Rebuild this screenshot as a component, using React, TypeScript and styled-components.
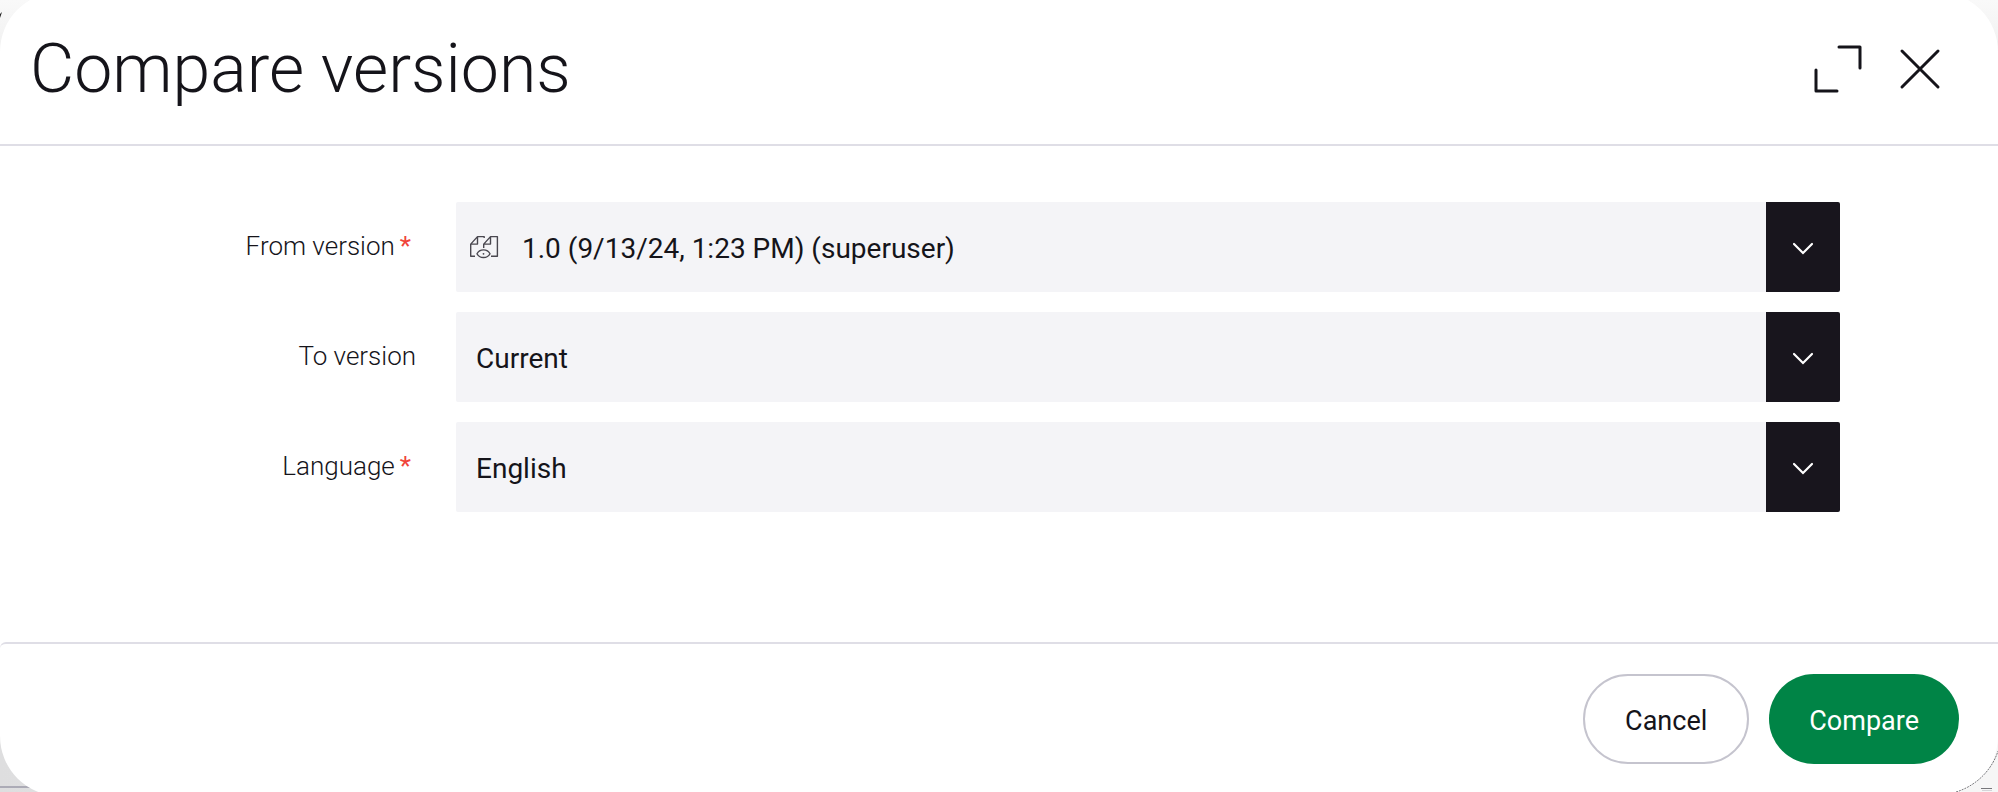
import React, { useId } from "react";
import styled, { createGlobalStyle } from "styled-components";

const GlobalStyle = createGlobalStyle`
  *, *::before, *::after { box-sizing: border-box; }
  body {
    margin: 0;
    color: #15141a;
    background: #f6f6f7;
    font-family: Roboto, "Liberation Sans", sans-serif;
  }
`;

const Backdrop = styled.div`
  position: relative;
  display: flex;
  flex-direction: column;
  min-height: 100vh;
  overflow: hidden;
  background: linear-gradient(to right, #dededf, #f6f6f6 50%) bottom / 100% 50% no-repeat,
    linear-gradient(to bottom, #f9f9f9, #efefef 60px);
`;

const PageRule = styled.div`
  position: absolute;
  left: 0;
  bottom: 4px;
  width: 40px;
  height: 2px;
  background: #acabb6;
`;

const PageCorner = styled.svg`
  position: absolute;
  right: 0;
  bottom: 0;
  width: 44px;
  height: 46px;
`;

const PageMark = styled.svg`
  position: absolute;
  top: 12px;
  left: 0;
  width: 2px;
  height: 6px;
`;

const Dialog = styled.section`
  position: relative;
  flex: 1;
  display: flex;
  flex-direction: column;
  margin: -8px 0 -4px;
  border-radius: 60px;
  background: #fff;
`;

const Header = styled.header`
  display: flex;
  justify-content: space-between;
  align-items: center;
  height: 154px;
  padding: 2px 42px 0 30px;
  border-bottom: 2px solid #dfdee6;
`;

const Title = styled.h1`
  margin: 0;
  font-size: 68px;
  line-height: 80px;
  font-weight: 300;
`;

const HeaderActions = styled.div`
  display: flex;
  gap: 10px;
`;

const IconButton = styled.button`
  display: flex;
  align-items: center;
  justify-content: center;
  width: 72px;
  height: 72px;
  padding: 0;
  border: 0;
  background: none;
  color: inherit;
  cursor: pointer;
`;

const Form = styled.form`
  flex: 1;
  display: flex;
  flex-direction: column;
  gap: 20px;
  padding: 56px 158px 128px 0;
`;

const Row = styled.div`
  display: grid;
  grid-template-columns: 416px 1fr;
  column-gap: 40px;
  align-items: center;
`;

const Label = styled.label`
  padding-bottom: 2px;
  text-align: right;
  font-size: 26px;
  line-height: 32px;
  font-weight: 300;
`;

const Required = styled.span`
  margin: 0 5px;
  color: #f0443a;
  font-weight: 400;
`;

const SelectBox = styled.div`
  display: grid;
  grid-template-columns: 66px 1fr 74px;
  height: 90px;
  border-radius: 2px;
  overflow: hidden;
  background: #f4f4f7;
`;

const Select = styled.select<{ $withIcon: boolean }>`
  grid-area: 1 / 1 / 2 / 4;
  appearance: none;
  width: 100%;
  height: 100%;
  margin: 0;
  padding: 2px 80px 0 ${(p) => (p.$withIcon ? 66 : 20)}px;
  border: 0;
  border-radius: 0;
  background: transparent;
  color: inherit;
  font: 400 28px Roboto, "Liberation Sans", sans-serif;
  cursor: pointer;
`;

const ValueIcon = styled.span`
  grid-area: 1 / 1;
  display: flex;
  align-items: center;
  padding-left: 13px;
  pointer-events: none;
`;

const Arrow = styled.span`
  grid-area: 1 / 3;
  display: flex;
  align-items: center;
  justify-content: center;
  padding-top: 2px;
  background: #18151d;
  color: #fff;
  pointer-events: none;
`;

const Footer = styled.footer`
  display: flex;
  justify-content: flex-end;
  gap: 20px;
  height: 154px;
  padding: 30px 39px 0;
  border-top: 2px solid #dfdee6;
  border-top-left-radius: 6px;
`;

const Button = styled.button<{ $primary?: boolean }>`
  height: 90px;
  padding: 4px 40px 0;
  border: ${(p) => (p.$primary ? "0" : "2px solid #c5c4ce")};
  border-radius: 45px;
  background: ${(p) => (p.$primary ? "#008446" : "#fff")};
  color: ${(p) => (p.$primary ? "#fff" : "inherit")};
  font: 400 27px Roboto, "Liberation Sans", sans-serif;
  cursor: pointer;
`;

const ExpandIcon = () => (
  <svg width="50" height="50" viewBox="0 0 50 50" fill="none" stroke="currentColor" strokeWidth="3" strokeLinecap="round" strokeLinejoin="round" aria-hidden="true">
    <path d="M26 3H47V24M3 26V47H24" />
  </svg>
);

const CloseIcon = () => (
  <svg width="42" height="42" viewBox="0 0 42 42" fill="none" stroke="currentColor" strokeWidth="3" strokeLinecap="round" aria-hidden="true">
    <path d="M3 3 39 39M39 3 3 39" />
  </svg>
);

const ChevronIcon = () => (
  <svg width="22" height="14" viewBox="0 0 22 14" fill="none" stroke="currentColor" strokeWidth="2.2" strokeLinecap="round" aria-hidden="true">
    <path d="M2 3 11 12 20 3" />
  </svg>
);

const VersionsIcon = () => (
  <svg width="30" height="26" viewBox="0 0 30 26" fill="none" stroke="#49474f" strokeWidth="1.4" strokeLinejoin="round" aria-hidden="true">
    <path d="M6 22.3H1.7V10.1L8.5 2.6H15.2V4.1M8.5 2.6V10.1H1.7" />
    <path d="M14.7 14.1V10.1L21.5 2.6H28.4V22.3H22M21.5 2.6V10.1H14.7" />
    <path d="M8 19.8C10.5 14.6 18.5 14.6 21 19.8C18.5 24.8 10.5 24.8 8 19.8Z" />
    <circle cx="14.5" cy="19.8" r="0.9" fill="#49474f" stroke="none" />
  </svg>
);

type FieldProps = {
  label: string;
  options: string[];
  required?: boolean;
  icon?: React.ReactNode;
};

const Field = ({ label, options, required = false, icon }: FieldProps) => {
  const id = useId();
  return (
    <Row>
      <Label htmlFor={id}>
        {label}
        {required && <Required>*</Required>}
      </Label>
      <SelectBox>
        <Select id={id} $withIcon={!!icon} required={required}>
          {options.map((option) => (
            <option key={option}>{option}</option>
          ))}
        </Select>
        {icon && <ValueIcon>{icon}</ValueIcon>}
        <Arrow>
          <ChevronIcon />
        </Arrow>
      </SelectBox>
    </Row>
  );
};

export default function App() {
  return (
    <>
      <GlobalStyle />
      <Backdrop>
        <PageRule />
        <PageMark viewBox="0 0 2 6" aria-hidden="true">
          <path d="M2 0 0 6V2Z" fill="#222" />
        </PageMark>
        <Dialog role="dialog" aria-labelledby="dialog-title">
          <Header>
            <Title id="dialog-title">Compare versions</Title>
            <HeaderActions>
              <IconButton type="button" aria-label="Expand">
                <ExpandIcon />
              </IconButton>
              <IconButton type="button" aria-label="Close">
                <CloseIcon />
              </IconButton>
            </HeaderActions>
          </Header>
          <Form id="compare-form" onSubmit={(e) => e.preventDefault()}>
            <Field
              label="From version"
              required
              icon={<VersionsIcon />}
              options={["1.0 (9/13/24, 1:23 PM) (superuser)"]}
            />
            <Field label="To version" options={["Current"]} />
            <Field label="Language" required options={["English"]} />
          </Form>
          <Footer>
            <Button type="button">Cancel</Button>
            <Button type="submit" form="compare-form" $primary>
              Compare
            </Button>
          </Footer>
        </Dialog>
        <PageCorner viewBox="0 0 44 46" fill="none" aria-hidden="true">
          <path d="M2 46C22 40 38 24 44 5" stroke="#77777b" strokeDasharray="2 1" />
          <path d="M27 42.5H38" stroke="#77777b" />
          <path d="M28 44.5H38" stroke="#d4d4d8" />
        </PageCorner>
      </Backdrop>
    </>
  );
}
